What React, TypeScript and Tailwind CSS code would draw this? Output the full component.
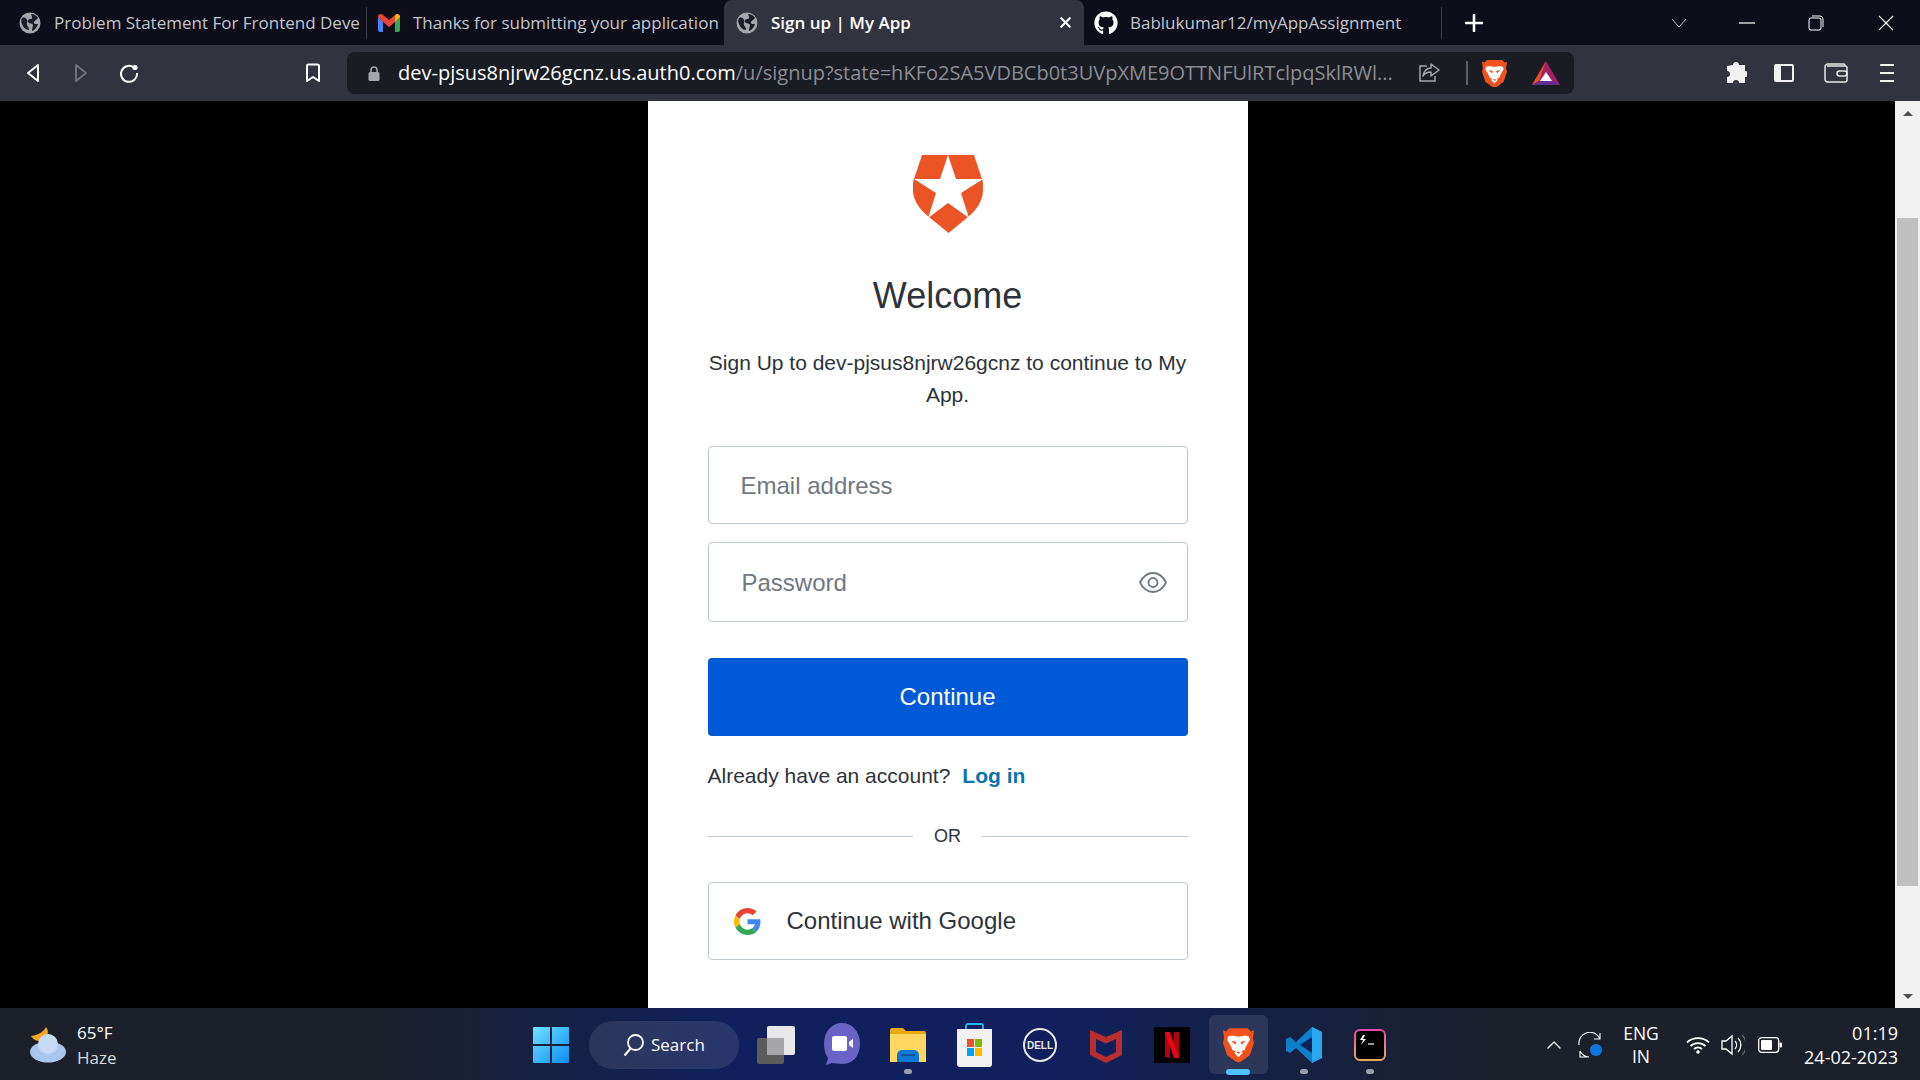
import { FaGithub } from "react-icons/fa";
import { ChevronUp, X } from "lucide-react";

const uiFont = "font-['Open_Sans',sans-serif]";
const pageFont = "font-['Liberation_Sans',Arial,sans-serif]";

function Globe() {
  return (
    <svg width="22" height="22" viewBox="0 0 22 22">
      <circle cx="11" cy="11" r="10.5" fill="#a3a5ab" />
      <path d="M3 6c3-1 4 0 5 2s-1 3 0 5 2 2 2 5c-3 0-6-3-7-6-1-2-1-4 0-6zM12 2c3 0 6 2 7 4l-2 2c-2 1-3 3-1 4l3 0c-1 3-3 6-6 7 0-3 1-4 1-6s-4-1-5-3 1-3 3-3 1-3 0-5z" fill="#1a1c28" />
    </svg>
  );
}

function Gmail() {
  return (
    <svg width="22" height="18" viewBox="0 0 22 18">
      <path d="M0 3v13a2 2 0 0 0 2 2h3V8z" fill="#4285f4" />
      <path d="M22 3v13a2 2 0 0 1-2 2h-3V8z" fill="#34a853" />
      <path d="M0 3c0-3 3-4 5-2l6 5 6-5c2-2 5-1 5 2l-5 5-6 5-6-5z" fill="#ea4335" />
      <path d="M17 1.2c2-2 5-1 5 1.8l-5 5z" fill="#fbbc04" />
    </svg>
  );
}

function BraveIcon({ size = 30 }: { size?: number }) {
  return (
    <svg width={size} height={size * 1.15} viewBox="0 0 30 34">
      <path d="M6 1h18l3 3 3-1-1 8 1 4-4 12-8 6-3 1-3-1-8-6-4-12 1-4-1-8 3 1z" fill="#f1511c" />
      <path d="M5 9l4-1 4 1h4l4-1 4 1 1 3-4 7-1 3-3 1 1 2-4 4-4-4 1-2-3-1-1-3-4-7z" fill="#fff" />
      <path d="M8 13l5 1-1 3zM22 13l-5 1 1 3zM13 24h4l-2 2z" fill="#f1511c" />
    </svg>
  );
}

function Bat() {
  return (
    <svg width="28" height="25" viewBox="0 0 28 25">
      <path d="M14 0L0 24h28z" fill="#9e1f63" />
      <path d="M14 0L0 24l7-4z" fill="#f04e23" />
      <path d="M0 24l7-4h14l7 4z" fill="#662d91" />
      <path d="M14 11l-6 9h12z" fill="#fff" />
    </svg>
  );
}

function TaskItem({ children, dot, active }: { children: React.ReactNode; dot?: boolean; active?: boolean }) {
  return (
    <div className="relative flex h-[72px] w-[66px] items-center justify-center">
      {active && <div className="absolute top-[6px] left-[3.5px] h-[59px] w-[59px] rounded-md bg-white/10" />}
      <div className="relative flex items-center justify-center">{children}</div>
      {dot && <div className="absolute bottom-[7px] left-[29px] h-[5px] w-[8px] rounded-full bg-[#9aa0ab]" />}
      {active && <div className="absolute bottom-[6px] left-[21px] h-[6px] w-[24px] rounded-full bg-[#4cc2ff]" />}
    </div>
  );
}

function TabStrip() {
  return (
    <div className={`flex h-[45px] items-center bg-[#0d0e1a] text-[17px] text-[#c3c5cb] ${uiFont}`}>
      <div className="flex h-full w-[366px] items-center pl-[19px]">
        <Globe />
        <span className="ml-[13px] whitespace-nowrap">Problem Statement For Frontend Deve</span>
      </div>
      <div className="h-[32px] w-px bg-[#3c3e48]" />
      <div className="flex h-full w-[357px] items-center pl-[11px]">
        <Gmail />
        <span className="ml-[13px] whitespace-nowrap">Thanks for submitting your application</span>
      </div>
      <div className="flex h-full w-[360px] items-center rounded-t-lg bg-[#31343f] pl-[12px] text-white">
        <Globe />
        <span className="ml-[13px] w-[286px] font-semibold whitespace-nowrap">Sign up | My App</span>
        <X size={17} strokeWidth={3} className="text-white" />
      </div>
      <div className="flex h-full w-[357px] items-center pl-[10px]">
        <FaGithub size={24} className="text-white" />
        <span className="ml-[12px] whitespace-nowrap">Bablukumar12/myAppAssignment</span>
      </div>
      <div className="h-[32px] w-px bg-[#3c3e48]" />
      <svg className="ml-[23px]" width="18" height="18" viewBox="0 0 18 18">
        <path d="M9 1v16M1 9h16" stroke="#fff" strokeWidth="2.6" strokeLinecap="round" />
      </svg>
      <svg className="ml-[188px]" width="16" height="10" viewBox="0 0 16 10" fill="none">
        <path d="M1 1l7 8 7-8" stroke="#b9bbc0" strokeWidth="1" />
      </svg>
      <svg className="ml-[52px]" width="16" height="2" viewBox="0 0 16 2">
        <path d="M0 1h16" stroke="#fff" strokeWidth="1.2" />
      </svg>
      <svg className="ml-[53px]" width="16" height="16" viewBox="0 0 16 16" fill="none">
        <rect x="1" y="3" width="12" height="12" rx="2" stroke="#fff" strokeWidth="1" />
        <path d="M4 1h8a3 3 0 0 1 3 3v8" stroke="#fff" strokeWidth="1" />
      </svg>
      <svg className="ml-[54px]" width="16" height="16" viewBox="0 0 16 16">
        <path d="M1 1l14 14M15 1L1 15" stroke="#fff" strokeWidth="1.1" />
      </svg>
    </div>
  );
}

function Toolbar() {
  return (
    <div className="flex h-[56px] items-center bg-[#31343f]">
      <svg className="ml-[26px]" width="14" height="20" viewBox="0 0 14 20" fill="none">
        <path d="M12 2v16L2 10z" stroke="#fff" strokeWidth="2" strokeLinejoin="round" />
      </svg>
      <svg className="ml-[34px]" width="14" height="20" viewBox="0 0 14 20" fill="none">
        <path d="M2 2v16l10-8z" stroke="#70727b" strokeWidth="2" strokeLinejoin="round" />
      </svg>
      <svg className="ml-[31px]" width="20" height="20" viewBox="0 0 20 20" fill="none">
        <path d="M15.5 5A8 8 0 1 0 18 10" stroke="#fff" strokeWidth="2" />
        <circle cx="16" cy="4.5" r="2.6" fill="#fff" />
      </svg>
      <svg className="ml-[166px]" width="16" height="20" viewBox="0 0 16 20" fill="none">
        <path d="M2 3a1.500 1.500 0 0 1 1.500-1.500h9A1.500 1.500 0 0 1 14 3v15l-6-4-6 4z" stroke="#fff" strokeWidth="2" strokeLinejoin="round" />
      </svg>
      <div className={`ml-[26px] flex h-[42px] w-[1227px] items-center rounded-lg bg-[#1a1c24] ${uiFont}`}>
        <svg className="ml-[21px]" width="12" height="15" viewBox="0 0 12 15">
          <path d="M3 6V4a3 3 0 0 1 6 0v2" fill="none" stroke="#a3a5ab" strokeWidth="1.6" />
          <rect x="0.500" y="6" width="11" height="9" rx="1.500" fill="#a3a5ab" />
        </svg>
        <div className="ml-[18px] w-[996px] text-[20px] whitespace-nowrap text-[#8b8d93]">
          <span className="text-white">dev-pjsus8njrw26gcnz.us.auth0.com</span>/u/signup?state=hKFo2SA5VDBCb0t3UVpXME9OTTNFUlRTclpqSklRWl...
        </div>
        <svg className="ml-[24px]" width="22" height="20" viewBox="0 0 22 20" fill="none">
          <path d="M9 3H2v15h15v-5" stroke="#a3a5ab" strokeWidth="1.5" />
          <path d="M13 1l8 6-8 6V9c-4 0-6 1-8 4 1-5 4-8 8-8z" stroke="#a3a5ab" strokeWidth="1.5" strokeLinejoin="round" />
        </svg>
        <div className="ml-[26px] h-[24px] w-[2px] bg-[#5c5e66]" />
        <div className="ml-[14px] flex"><BraveIcon size={25} /></div>
        <div className="ml-[25px] flex"><Bat /></div>
      </div>
      <svg className="ml-[151px]" width="22" height="22" viewBox="0 0 22 22">
        <path d="M8 3a3 3 0 0 1 6 0h6v6a3 3 0 0 1 0 6v6h-6a3 3 0 0 0-6 0H2v-6a3 3 0 0 0 0-6V4z" fill="#f1f1f1" />
      </svg>
      <svg className="ml-[27px]" width="20" height="18" viewBox="0 0 20 18">
        <rect x="0" y="0" width="20" height="18" rx="2" fill="#f1f1f1" />
        <rect x="7" y="2" width="11" height="14" fill="#31343f" />
      </svg>
      <svg className="ml-[30px]" width="24" height="20" viewBox="0 0 24 20" fill="none">
        <path d="M21 3V2.500A1.500 1.500 0 0 0 19.500 1H4a3 3 0 0 0-3 3v12a3 3 0 0 0 3 3h17a2 2 0 0 0 2-2V5a2 2 0 0 0-2-2H3" stroke="#e6e6e6" strokeWidth="1.5" />
        <rect x="13" y="8" width="10" height="5" rx="2.500" stroke="#e6e6e6" strokeWidth="1.5" />
      </svg>
      <svg className="ml-[32px]" width="14" height="20" viewBox="0 0 14 20">
        <path d="M1 2h12M0 10h14M0 18h14" stroke="#f1f1f1" strokeWidth="2.2" strokeLinecap="round" />
      </svg>
    </div>
  );
}

function Auth0Logo() {
  return (
    <svg width="70" height="78" viewBox="0 0 70 78">
      <path d="M9 0h52l8 24c1 2 1 4 1 11 0 10-6 20-15 27L35.500 78 16 62C6 54 0 45 0 35c0-6 0-9 1-11z" fill="#eb5424" />
      <path d="M35 0l8 24h27L48 38l8 25-21-15-20 15 8-25L1 24h26z" fill="#fff" />
    </svg>
  );
}

function GoogleG() {
  return (
    <svg width="27" height="27" viewBox="0 0 48 48">
      <path fill="#EA4335" d="M24 9.500c3.500 0 6.700 1.200 9.200 3.600l6.900-6.900C35.900 2.400 30.500 0 24 0 14.600 0 6.500 5.400 2.600 13.200l8 6.200C12.500 13.700 17.800 9.500 24 9.500z" />
      <path fill="#4285F4" d="M47 24.500c0-1.600-.2-3.100-.4-4.500H24v9h12.900c-.6 3-2.200 5.500-4.800 7.200l7.700 6C44.300 38 47 31.800 47 24.500z" />
      <path fill="#FBBC05" d="M10.500 28.600c-.5-1.400-.8-3-.8-4.600s.3-3.100.8-4.600l-8-6.200C.9 16.500 0 20.100 0 24s.9 7.500 2.600 10.800z" />
      <path fill="#34A853" d="M24 48c6.500 0 11.900-2.100 15.900-5.800l-7.700-6c-2.200 1.400-4.900 2.300-8.200 2.300-6.200 0-11.500-4.200-13.400-9.900l-8 6.200C6.500 42.600 14.600 48 24 48z" />
    </svg>
  );
}

function SignupCard() {
  return (
    <div className={`flex h-full w-[600px] flex-col items-center overflow-hidden bg-white px-[60px] ${pageFont}`}>
      <div className="mt-[54px] flex"><Auth0Logo /></div>
      <h1 className="mt-[39px] text-[36px] leading-[48px] text-[#2d333a]">Welcome</h1>
      <p className="mt-[27px] w-full text-center text-[21px] leading-[32px] text-[#2d333a]">
        Sign Up to dev-pjsus8njrw26gcnz to continue to My App.
      </p>
      <input
        placeholder="Email address"
        className="mt-[35px] h-[78px] w-full rounded border border-[#c2c8d0] px-[32px] pt-[2px] text-[24px] text-[#2d333a] placeholder:text-[#6f7780]"
      />
      <div className="relative mt-[18px] h-[80px] w-full">
        <input
          type="password"
          placeholder="Password"
          className="h-full w-full rounded border border-[#c2c8d0] pt-[2px] pr-[32px] pl-[33px] text-[24px] placeholder:text-[#6f7780]"
        />
        <svg className="absolute top-[30px] right-[21px]" width="28" height="21" viewBox="0 0 28 21" fill="none">
          <path d="M1 10.500C4 4.500 9 1 14 1s10 3.500 13 9.500C24 16.500 19 20 14 20S4 16.500 1 10.500z" stroke="#6f7780" strokeWidth="1.800" />
          <circle cx="14" cy="10.500" r="4.500" stroke="#6f7780" strokeWidth="1.800" />
        </svg>
      </div>
      <button className="mt-[36px] h-[78px] w-full rounded bg-[#0059d6] text-[24px] text-white">Continue</button>
      <div className="mt-[24px] w-full text-[21px] leading-[32px] text-[#2d333a]">
        Already have an account?<a className="ml-[12px] font-bold text-[#0a74b0]">Log in</a>
      </div>
      <div className="mt-[33px] flex w-full items-center">
        <div className="h-px flex-1 bg-[#c2c8d0]" />
        <span className="px-[21px] text-[18px] leading-[23px] text-[#2d333a]">OR</span>
        <div className="h-px flex-1 bg-[#c2c8d0]" />
      </div>
      <button className="mt-[34px] flex h-[78px] w-full shrink-0 items-center rounded border border-[#c2c8d0] pl-[25px] text-[24px] text-[#2d333a]">
        <GoogleG />
        <span className="ml-[26px]">Continue with Google</span>
      </button>
    </div>
  );
}

function Scrollbar() {
  return (
    <div className="flex w-[25px] flex-col items-center bg-[#f1f1f1]">
      <div className="mt-[10px] h-0 w-0 border-x-[5.500px] border-b-[5.500px] border-x-transparent border-b-[#505050]" />
      <div className="mt-[102px] h-[668px] w-[21px] bg-[#c0c0c0]" />
      <div className="mt-[108px] h-0 w-0 border-x-[5.500px] border-t-[5.500px] border-x-transparent border-t-[#505050]" />
    </div>
  );
}

function Taskbar() {
  return (
    <div className={`flex h-[72px] items-center bg-[linear-gradient(90deg,#1b202b_0%,#1b202b_20%,#10205c_38%,#10205c_55%,#1b202b_78%,#1b202b_100%)] pt-[2px] text-white ${uiFont}`}>
      <svg className="ml-[29px]" width="38" height="36" viewBox="0 0 38 36">
        <path d="M17 0c-2 4-7 8-15 9 3 5 8 6 13 4 3-2 6-8 2-13z" fill="#f5a623" />
        <ellipse cx="19" cy="25" rx="18" ry="10.500" fill="#a9c7ee" />
        <circle cx="19" cy="17" r="10" fill="#c5daf5" />
      </svg>
      <div className="ml-[10px] w-[60px] text-[17px] leading-[25px]">
        <div>65°F</div>
        <div className="text-[#d7d9dd]">Haze</div>
      </div>
      <div className="ml-[381px] flex w-[66px] justify-center">
        <svg width="36" height="36" viewBox="0 0 36 36">
          <defs>
            <linearGradient id="win" x1="0" y1="0" x2="1" y2="1">
              <stop offset="0" stopColor="#6fe3ff" />
              <stop offset="1" stopColor="#0d8df0" />
            </linearGradient>
          </defs>
          <path d="M0 1a1 1 0 0 1 1-1h16v17H0zM19 0h16a1 1 0 0 1 1 1v16H19zM0 19h17v17H1a1 1 0 0 1-1-1zM19 19h17v16a1 1 0 0 1-1 1H19z" fill="url(#win)" />
        </svg>
      </div>
      <div className="ml-[5px] flex h-[48px] w-[150px] items-center rounded-full bg-white/10 pl-[34px]">
        <svg width="22" height="24" viewBox="0 0 22 24" fill="none">
          <circle cx="12.500" cy="9.500" r="7.500" stroke="#fff" strokeWidth="1.800" />
          <path d="M7.500 15.500L1.500 22.500" stroke="#fff" strokeWidth="2" />
        </svg>
        <span className="ml-[6px] text-[17px]">Search</span>
      </div>
      <div className="ml-[4px] flex">
        <TaskItem>
          <svg width="38" height="38" viewBox="0 0 38 38">
            <rect x="0" y="12" width="27" height="26" rx="2" fill="#5c5c5c" />
            <rect x="10" y="0" width="28" height="29" rx="2" fill="#e8e8ea" />
            <rect x="10" y="12" width="17" height="17" fill="#a6a6a8" />
          </svg>
        </TaskItem>
        <TaskItem>
          <svg width="36" height="44" viewBox="0 0 36 44">
            <path d="M18 0c10 0 18 8 18 21s-8 20-18 20c-4 0-7-1-10-1l-6 2 2-7C1 31 0 26 0 21 0 8 8 0 18 0z" fill="#6a62c4" />
            <rect x="8" y="13" width="15" height="15" rx="2" fill="#fff" />
            <path d="M25 19l4-3v9l-4-3z" fill="#fff" />
          </svg>
        </TaskItem>
        <TaskItem dot>
          <svg width="36" height="34" viewBox="0 0 36 34">
            <path d="M0 2a2 2 0 0 1 2-2h11l3 3h18a2 2 0 0 1 2 2v3H0z" fill="#e8a80f" />
            <path d="M0 6h36v28H0z" fill="#ffd75e" />
            <path d="M7 34v-7a5 5 0 0 1 5-5h12a5 5 0 0 1 5 5v7z" fill="#0f78d4" />
            <path d="M11 27h14" stroke="#064e8c" strokeWidth="1.500" />
          </svg>
        </TaskItem>
        <TaskItem>
          <svg width="35" height="44" viewBox="0 0 35 44">
            <path d="M9 10V3a2 2 0 0 1 2-2h13a2 2 0 0 1 2 2v7" fill="none" stroke="#2fb5ee" strokeWidth="1.800" />
            <path d="M0 6h35v35a3 3 0 0 1-3 3H3a3 3 0 0 1-3-3z" fill="#f2f2f2" />
            <rect x="10" y="16" width="7" height="8" fill="#f25022" />
            <rect x="18" y="16" width="7" height="8" fill="#7fba00" />
            <rect x="10" y="25" width="7" height="8" fill="#00a4ef" />
            <rect x="18" y="25" width="7" height="8" fill="#ffb900" />
          </svg>
        </TaskItem>
        <TaskItem>
          <div className={`flex h-[34px] w-[34px] items-center justify-center rounded-full border-2 border-[#e6e6e6] text-[10px] font-semibold text-[#e6e6e6] ${pageFont}`}>
            DELL
          </div>
        </TaskItem>
        <TaskItem>
          <svg width="32" height="36" viewBox="0 0 32 36">
            <path d="M0 3l16 7 16-7v25l-16 8-16-8z" fill="#b82e2e" />
            <path d="M6 12l10 4.500L26 12v13l-10 5-10-5z" fill="#10205c" />
          </svg>
        </TaskItem>
        <TaskItem>
          <svg width="36" height="36" viewBox="0 0 36 36">
            <rect width="36" height="36" fill="#000" />
            <path d="M11 5h5v26l-5-1zM20 5h5v26l-5-1z" fill="#b1060f" />
            <path d="M11 5h5l9 26h-5z" fill="#e50914" />
          </svg>
        </TaskItem>
        <TaskItem active>
          <BraveIcon size={31} />
        </TaskItem>
        <TaskItem dot>
          <svg width="36" height="36" viewBox="0 0 36 36">
            <path d="M26 0l10 5v26l-10 5-16-15-6 5-4-2V12l4-2 6 5z" fill="#0e7fcb" />
            <path d="M26 0l10 5v26l-10 5z" fill="#29a6ee" />
            <path d="M26 10L14 18l12 8z" fill="#10205c" />
          </svg>
        </TaskItem>
        <TaskItem dot>
          <svg width="32" height="32" viewBox="0 0 32 32" fill="none">
            <defs>
              <linearGradient id="term" x1="0" y1="0" x2="0" y2="1">
                <stop offset="0" stopColor="#e04fa8" />
                <stop offset="1" stopColor="#e8a95a" />
              </linearGradient>
            </defs>
            <rect x="1" y="1" width="30" height="30" rx="5" fill="#000" stroke="url(#term)" strokeWidth="2" />
            <path d="M9 6L6 11h3l-2 5 5-6H9l2-4z" fill="#fff" />
            <path d="M14 15h6" stroke="#c9c9c9" strokeWidth="1.500" />
          </svg>
        </TaskItem>
      </div>
      <div className="ml-[139px] flex items-center">
        <ChevronUp size={24} strokeWidth={1.300} className="text-white" />
        <svg className="ml-[12px]" width="24" height="26" viewBox="0 0 24 26" fill="none">
          <path d="M1 13A11 11 0 0 1 22 7M22 1v6h-6M2 19v6h7M2 19a11 11 0 0 0 9 6" stroke="#fff" strokeWidth="1.100" />
          <circle cx="18" cy="18" r="6" fill="#0a78e0" />
        </svg>
        <div className="ml-[9px] w-[60px] text-center text-[17.500px] leading-[23px]">
          <div>ENG</div>
          <div>IN</div>
        </div>
        <svg className="ml-[15px]" width="24" height="18" viewBox="0 0 24 18" fill="none">
          <path d="M1 6.500a16 16 0 0 1 22 0M4.500 10a11 11 0 0 1 15 0M8 13a6 6 0 0 1 8 0" stroke="#fff" strokeWidth="1.800" />
          <circle cx="12" cy="16" r="1.800" fill="#fff" />
        </svg>
        <svg className="ml-[11px]" width="24" height="24" viewBox="0 0 24 24" fill="none">
          <path d="M1 8h4l6-5v18l-6-5H1z" stroke="#fff" strokeWidth="1.300" />
          <path d="M14 8a6 6 0 0 1 0 8M17 5a10 10 0 0 1 0 14" stroke="#fff" strokeWidth="1.300" />
          <path d="M21 2a14 14 0 0 1 0 20" stroke="#666" strokeWidth="1.300" />
        </svg>
        <svg className="ml-[13px]" width="24" height="16" viewBox="0 0 24 16" fill="none">
          <rect x="0.700" y="0.700" width="20" height="14.600" rx="3" stroke="#fff" strokeWidth="1.300" />
          <rect x="3" y="3" width="11" height="10" rx="1" fill="#fff" />
          <rect x="21.500" y="5.500" width="2.500" height="5" rx="1" fill="#fff" />
        </svg>
        <div className="ml-[21px] w-[95px] text-right text-[18px] leading-[24px]">
          <div>01:19</div>
          <div>24-02-2023</div>
        </div>
      </div>
    </div>
  );
}

export default function App() {
  return (
    <div className="flex h-screen w-[1920px] flex-col overflow-hidden bg-black">
      <TabStrip />
      <Toolbar />
      <main className="flex min-h-0 flex-1">
        <div className="flex flex-1 justify-center">
          <SignupCard />
        </div>
        <Scrollbar />
      </main>
      <Taskbar />
    </div>
  );
}
